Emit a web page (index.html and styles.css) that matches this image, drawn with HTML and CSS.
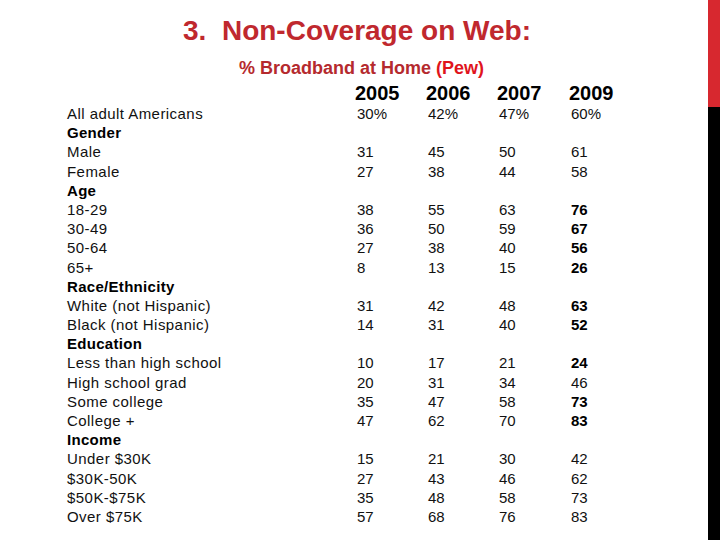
FILE: index.html
```html
<!DOCTYPE html>
<html>
<head>
<meta charset="utf-8">
<link rel="stylesheet" href="styles.css">
</head>
<body>
<div class="slide">
  <div class="main">
    <h1 class="title">3.&nbsp; Non-Coverage on Web:</h1>
    <h2 class="subtitle">% Broadband at Home <span class="pew">(Pew)</span></h2>
    <div class="table">
      <div class="row head"><span></span><span>2005</span><span>2006</span><span>2007</span><span>2009</span></div>
      <div class="row"><span class="lbl">All adult Americans</span><span>30%</span><span>42%</span><span>47%</span><span>60%</span></div>
      <div class="row"><span class="lbl group">Gender</span><span></span><span></span><span></span><span></span></div>
      <div class="row"><span class="lbl">Male</span><span>31</span><span>45</span><span>50</span><span>61</span></div>
      <div class="row"><span class="lbl">Female</span><span>27</span><span>38</span><span>44</span><span>58</span></div>
      <div class="row"><span class="lbl group">Age</span><span></span><span></span><span></span><span></span></div>
      <div class="row"><span class="lbl">18-29</span><span>38</span><span>55</span><span>63</span><span class="b">76</span></div>
      <div class="row"><span class="lbl">30-49</span><span>36</span><span>50</span><span>59</span><span class="b">67</span></div>
      <div class="row"><span class="lbl">50-64</span><span>27</span><span>38</span><span>40</span><span class="b">56</span></div>
      <div class="row"><span class="lbl">65+</span><span>8</span><span>13</span><span>15</span><span class="b">26</span></div>
      <div class="row"><span class="lbl group">Race/Ethnicity</span><span></span><span></span><span></span><span></span></div>
      <div class="row"><span class="lbl">White (not Hispanic)</span><span>31</span><span>42</span><span>48</span><span class="b">63</span></div>
      <div class="row"><span class="lbl">Black (not Hispanic)</span><span>14</span><span>31</span><span>40</span><span class="b">52</span></div>
      <div class="row"><span class="lbl group">Education</span><span></span><span></span><span></span><span></span></div>
      <div class="row"><span class="lbl">Less than high school</span><span>10</span><span>17</span><span>21</span><span class="b">24</span></div>
      <div class="row"><span class="lbl">High school grad</span><span>20</span><span>31</span><span>34</span><span>46</span></div>
      <div class="row"><span class="lbl">Some college</span><span>35</span><span>47</span><span>58</span><span class="b">73</span></div>
      <div class="row"><span class="lbl">College +</span><span>47</span><span>62</span><span>70</span><span class="b">83</span></div>
      <div class="row"><span class="lbl group">Income</span><span></span><span></span><span></span><span></span></div>
      <div class="row"><span class="lbl">Under $30K</span><span>15</span><span>21</span><span>30</span><span>42</span></div>
      <div class="row"><span class="lbl">$30K-50K</span><span>27</span><span>43</span><span>46</span><span>62</span></div>
      <div class="row"><span class="lbl">$50K-$75K</span><span>35</span><span>48</span><span>58</span><span>73</span></div>
      <div class="row"><span class="lbl">Over $75K</span><span>57</span><span>68</span><span>76</span><span>83</span></div>
    </div>
  </div>
  <div class="side">
    <div class="side-red"></div>
    <div class="side-black"></div>
  </div>
</div>
</body>
</html>
```

FILE: styles.css
```css
html, body {
  margin: 0;
  padding: 0;
  background: #ffffff;
}
body {
  font-family: "Liberation Sans", Arial, sans-serif;
  color: #000;
}
.slide {
  display: flex;
  width: 720px;
  height: 540px;
  overflow: hidden;
}
.main {
  flex: 1;
  display: flex;
  flex-direction: column;
}
.title {
  margin: 15px 0 0 6px;
  font-size: 28px;
  line-height: 32px;
  font-weight: bold;
  color: #c0282e;
  text-align: center;
  white-space: pre;
}
.subtitle {
  margin: 11px 0 0 15px;
  font-size: 18px;
  line-height: 20px;
  font-weight: bold;
  color: #b52a2e;
  text-align: center;
}
.pew {
  color: #e0141c;
}
.table {
  margin: 4px 0 0 67px;
  display: flex;
  flex-direction: column;
}
.row {
  display: grid;
  grid-template-columns: 290px 71px 71px 72px 1fr;
  font-size: 15px;
  line-height: 19.2px;
  height: 19.2px;
  white-space: nowrap;
  color: #111;
}
.row.head {
  font-size: 20px;
  font-weight: bold;
  line-height: 22px;
  height: 22px;
  color: #000;
}
.row.head span {
  margin-left: -2px;
}
.lbl {
  letter-spacing: 0.45px;
}
.group {
  font-weight: bold;
  color: #000;
  letter-spacing: 0.3px;
}
.b {
  font-weight: bold;
  color: #000;
}
.side {
  width: 12px;
  display: flex;
  flex-direction: column;
}
.side-red {
  height: 107px;
  background: #d7282f;
}
.side-black {
  flex: 1;
  background: #000;
}
```
